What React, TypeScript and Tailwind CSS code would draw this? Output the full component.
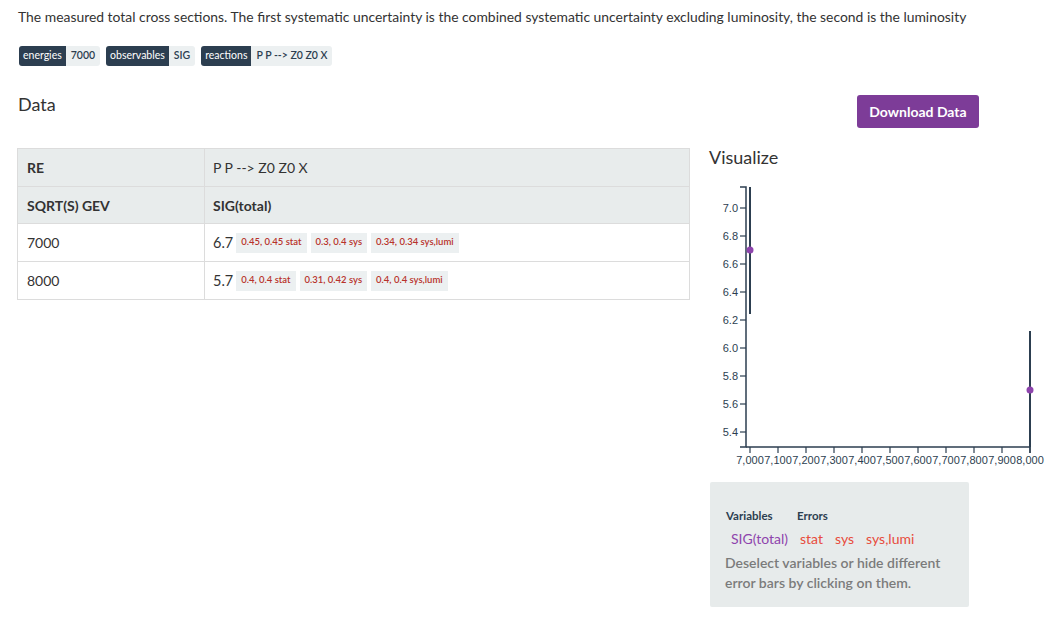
import React from "react";

const ticksY = [7.0, 6.8, 6.6, 6.4, 6.2, 6.0, 5.8, 5.6, 5.4];
const ticksX = Array.from({ length: 11 }, (_, i) => 7000 + i * 100);

function Chart() {
  const ax = 37;
  const yOf = (v: number) => 29 + ((7.0 - v) / 0.2) * 28;
  const xOf = (v: number) => 41 + ((v - 7000) / 100) * 28;
  const dark = "#2c3e50";
  return (
    <svg width={345} height={295} className="block" style={{ fontFamily: '"Liberation Sans", Arial, sans-serif' }}>
      <path d={`M${ax - 6},8H${ax}V268H${ax - 6}`} fill="none" stroke={dark} strokeWidth={1.5} />
      {ticksY.map((t) => (
        <g key={t}>
          <line x1={ax - 6} x2={ax} y1={yOf(t)} y2={yOf(t)} stroke={dark} strokeWidth={1.2} />
          <text x={ax - 8} y={yOf(t)} dy="0.35em" textAnchor="end" fontSize={11} fill={dark}>
            {t.toFixed(1)}
          </text>
        </g>
      ))}
      <path d={`M${ax},268H${xOf(8000)}V274`} fill="none" stroke={dark} strokeWidth={1.5} />
      {ticksX.map((t) => (
        <g key={t}>
          <line x1={xOf(t)} x2={xOf(t)} y1={268} y2={274} stroke={dark} strokeWidth={1.2} />
          <text x={xOf(t)} y={285} textAnchor="middle" fontSize={11} fill={dark}>
            {t.toLocaleString("en-US")}
          </text>
        </g>
      ))}
      <line x1={xOf(7000)} x2={xOf(7000)} y1={8} y2={135} stroke={dark} strokeWidth={2} />
      <circle cx={xOf(7000)} cy={yOf(6.7)} r={3.5} fill="#8e44ad" />
      <line x1={xOf(8000)} x2={xOf(8000)} y1={152} y2={268} stroke={dark} strokeWidth={2} />
      <circle cx={xOf(8000)} cy={yOf(5.7)} r={3.5} fill="#8e44ad" />
    </svg>
  );
}

function Tag({ k, v }: { k: string; v: string }) {
  return (
    <div className="flex h-[20px] items-center rounded-[3px] overflow-hidden text-[10.5px]">
      <span className="bg-[#2c3e50] text-white px-[4px] h-full flex items-center">{k}</span>
      <span className="bg-[#ecf0f1] text-[#2c3e50] font-semibold px-[5px] h-full flex items-center">{v}</span>
    </div>
  );
}

function Err({ t }: { t: string }) {
  return (
    <span className="bg-[#ecf0f1] text-[#b8322a] text-[9.5px] font-semibold h-[20px] px-[5px] flex items-center">
      {t}
    </span>
  );
}

function DataRow({ e, v, errs }: { e: string; v: string; errs: string[] }) {
  return (
    <div className="flex h-[38px] border-t border-[#dcdcdc]">
      <div className="w-[187px] pl-[9px] flex items-center border-r border-[#dcdcdc]">{e}</div>
      <div className="flex-1 pl-[8px] flex items-center">
        <span className="text-[14.5px] mr-[3px]">{v}</span>
        <div className="flex gap-[4px]">
          {errs.map((x) => (
            <Err key={x} t={x} />
          ))}
        </div>
      </div>
    </div>
  );
}

export default function App() {
  return (
    <div
      className="w-[1058px] h-[627px] bg-white text-[#333333] overflow-hidden"
      style={{ fontFamily: 'Lato, "Noto Sans", sans-serif' }}
    >
      <div className="pl-[18px] pt-[8px]">
        <p className="text-[13.9px] leading-[18px]">
          The measured total cross sections. The first systematic uncertainty is the combined systematic uncertainty excluding luminosity, the second is the luminosity
        </p>
        <div className="flex gap-[6px] mt-[20px] pl-[1px]">
          <Tag k="energies" v="7000" />
          <Tag k="observables" v="SIG" />
          <Tag k="reactions" v="P P --> Z0 Z0 X" />
        </div>
        <div className="flex items-start mt-[28px]">
          <h2 className="text-[18px] leading-[20px] w-[839px]">Data</h2>
          <button className="bg-[#7d3c98] text-white text-[14px] font-bold w-[122px] h-[33px] rounded-[3px] mt-[1px]">
            Download Data
          </button>
        </div>
        <div className="flex mt-[20px]">
          <div className="w-[673px] -ml-[1px] border border-[#dcdcdc] text-[14px] self-start">
            <div className="flex h-[37px] bg-[#e8ecec]">
              <div className="w-[187px] pl-[9px] flex items-center border-r border-[#dcdcdc] font-bold">RE</div>
              <div className="flex-1 pl-[8px] flex items-center">P P --&gt; Z0 Z0 X</div>
            </div>
            <div className="flex h-[37px] bg-[#e8ecec] border-t border-[#dcdcdc] font-bold">
              <div className="w-[187px] pl-[9px] flex items-center border-r border-[#dcdcdc]">SQRT(S) GEV</div>
              <div className="flex-1 pl-[8px] flex items-center">SIG(total)</div>
            </div>
            <DataRow e="7000" v="6.7" errs={["0.45, 0.45 stat", "0.3, 0.4 sys", "0.34, 0.34 sys,lumi"]} />
            <DataRow e="8000" v="5.7" errs={["0.4, 0.4 stat", "0.31, 0.42 sys", "0.4, 0.4 sys,lumi"]} />
          </div>
          <div className="ml-[19px] flex flex-col">
            <h2 className="text-[18px] leading-[20px] -mt-[1px]">Visualize</h2>
            <div className="mt-[12px]">
              <Chart />
            </div>
            <div className="mt-[8px] ml-[1px] w-[259px] h-[125px] bg-[#e7ebeb] rounded-[2px] pl-[16px] pt-[27px]">
              <div className="flex text-[11.5px] font-bold leading-[14px] text-[#2c3e50]">
                <span className="w-[71px]">Variables</span>
                <span>Errors</span>
              </div>
              <div className="flex text-[14px] leading-[18px] mt-[7px] ml-[5px]">
                <span className="text-[#8e44ad] mr-[12px]">SIG(total)</span>
                <span className="text-[#e74c3c] mr-[12px]">stat</span>
                <span className="text-[#e74c3c] mr-[12px]">sys</span>
                <span className="text-[#e74c3c]">sys,lumi</span>
              </div>
              <p className="text-[14px] leading-[20px] text-[#7b7b7b] font-semibold mt-[5px] -ml-[1px] pr-[20px]">
                Deselect variables or hide different error bars by clicking on them.
              </p>
            </div>
          </div>
        </div>
      </div>
    </div>
  );
}
